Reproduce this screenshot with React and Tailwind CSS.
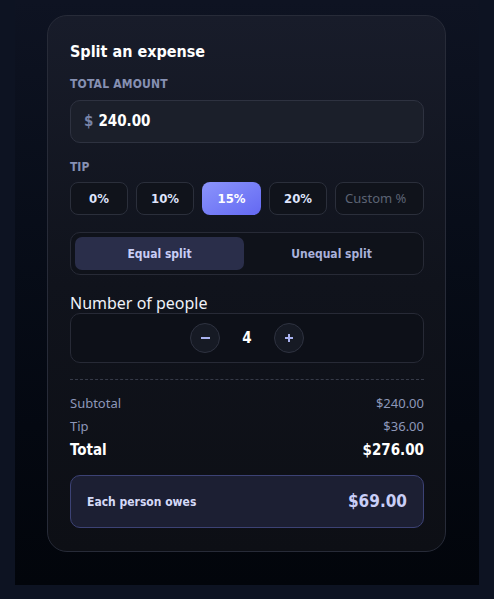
import React from "react";

function TipBtn({ label, active }) {
  if (active) {
    return (
      <div className="w-[59px] h-[33px] rounded-[8px] flex items-center justify-center text-[13px] font-bold text-white bg-gradient-to-br from-[#8c94fb] to-[#6468f2] font-['DejaVu_Sans_Condensed','DejaVu_Sans',sans-serif]">
        {label}
      </div>
    );
  }
  return (
    <div className="w-[58px] h-[33px] rounded-[8px] border border-[#2b2f3b] bg-[#10131b] flex items-center justify-center text-[13px] font-bold text-[#dfe4fb] font-['DejaVu_Sans_Condensed','DejaVu_Sans',sans-serif]">
      {label}
    </div>
  );
}

export default function App() {
  return (
    <div className="min-h-screen w-full bg-[#0d1322]">
      <div className="w-[464px] ml-[15px] pt-[15px] pb-[33px] pl-[32px] pr-[33px] bg-gradient-to-b from-[#0e1322] to-[#02050b]">
        <div className="w-[399px] rounded-[20px] border border-[#272b38] bg-gradient-to-b from-[#181c2a] via-[#10131c] to-[#0d0f15] pl-[22px] pr-[21px] pt-[25px] pb-[23px] font-['DejaVu_Sans_Condensed','DejaVu_Sans',sans-serif]">
          <div className="text-[16px] font-bold text-white leading-[22px]">Split an expense</div>

          <div className="mt-[14px] text-[12px] font-bold text-[#8690b2] tracking-[0.2px] leading-[14px]">
            TOTAL AMOUNT
          </div>
          <div className="mt-[9px] h-[43px] rounded-[10px] border border-[#2e3240] bg-[#1b1f2a] flex items-center pl-[13px]">
            <span className="text-[15px] font-bold text-[#7884a8]">$</span>
            <span className="ml-[5px] text-[15px] font-bold text-white">240.00</span>
          </div>

          <div className="mt-[17px] text-[12px] font-bold text-[#8690b2] leading-[14px]">TIP</div>
          <div className="mt-[8px] flex gap-[8px]">
            <TipBtn label="0%" />
            <TipBtn label="10%" />
            <TipBtn label="15%" active />
            <TipBtn label="20%" />
            <div className="flex-1 h-[33px] rounded-[8px] border border-[#2b2f3b] bg-[#10131b] flex items-center pl-[9px] text-[13px] text-[#5c6374] font-['Noto_Sans','Open_Sans',sans-serif]">
              Custom %
            </div>
          </div>

          <div className="mt-[17px] h-[43px] rounded-[10px] border border-[#272a36] bg-[#0f121a] p-[4px] flex">
            <div className="w-[169px] rounded-[7px] bg-[#2a2e4a] flex items-center justify-center text-[12px] font-bold text-[#c8cdf6]">
              Equal split
            </div>
            <div className="flex-1 flex items-center justify-center text-[12px] font-bold text-[#a9b1da]">
              Unequal split
            </div>
          </div>

          <div className="mt-[18px] text-[16px] text-[#eef1f8] leading-[20px] font-['Noto_Sans','Open_Sans',sans-serif]">
            Number of people
          </div>
          <div className="h-[50px] rounded-[10px] border border-[#272a36] bg-[#0d1018] flex items-center justify-center gap-[20px]">
            <div className="w-[30px] h-[30px] rounded-full border border-[#2e3240] bg-[#161a24] flex items-center justify-center">
              <div className="w-[9px] h-[2px] bg-[#a9b2f0]" />
            </div>
            <div className="w-[14px] text-center text-[15px] font-bold text-white">4</div>
            <div className="w-[30px] h-[30px] rounded-full border border-[#2e3240] bg-[#161a24] flex items-center justify-center">
              <svg width="10" height="10" viewBox="0 0 10 10">
                <path d="M5 1v8M1 5h8" stroke="#a9b2f0" strokeWidth="2" />
              </svg>
            </div>
          </div>

          <div className="mt-[16px] border-t border-dashed border-[#363a48]" />

          <div className="font-['Noto_Sans','Open_Sans',sans-serif] text-[13px] text-[#8d97b8] leading-[18px]">
            <div className="mt-[14px] flex justify-between">
              <span>Subtotal</span>
              <span>$240.00</span>
            </div>
            <div className="mt-[5px] flex justify-between">
              <span>Tip</span>
              <span>$36.00</span>
            </div>
          </div>
          <div className="mt-[5px] flex justify-between text-[15px] font-bold text-white leading-[20px]">
            <span>Total</span>
            <span>$276.00</span>
          </div>

          <div className="mt-[15px] h-[53px] rounded-[10px] border border-[#3c4275] bg-[#1c1f33] flex items-center justify-between pl-[16px] pr-[16px]">
            <span className="text-[12px] font-bold text-[#d4d9f7]">Each person owes</span>
            <span className="text-[17px] font-bold text-[#c9cef7]">$69.00</span>
          </div>
        </div>
      </div>
    </div>
  );
}
